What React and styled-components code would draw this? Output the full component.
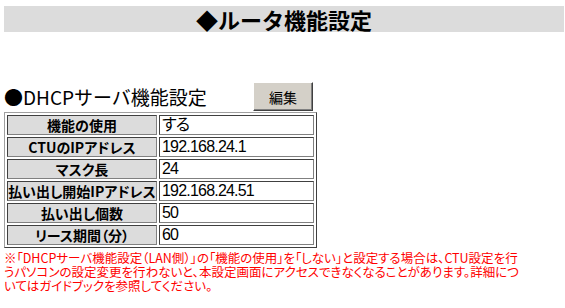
import React from 'react';
import styled, { createGlobalStyle } from 'styled-components';

const GlobalStyle = createGlobalStyle`
  html, body {
    margin: 0;
    padding: 0;
    background: #ffffff;
  }
  body {
    font-family: "Noto Sans CJK JP", "DejaVu Sans", sans-serif;
    color: #000000;
  }
`;

const Page = styled.div`
  padding: 6px 1px 0 4px;
  font-feature-settings: "palt";
`;

const TitleBar = styled.h1`
  margin: 0;
  height: 26px;
  background: #dcdcdc;
  display: flex;
  align-items: center;
  justify-content: center;
  font-size: 22px;
  font-weight: bold;
  line-height: 26px;
  font-feature-settings: normal;
`;

const SectionHead = styled.div`
  margin-top: 50px;
  width: 309px;
  height: 30px;
  display: flex;
  align-items: center;
  justify-content: space-between;
`;

const SectionTitle = styled.h2`
  margin: 0;
  font-size: 19px;
  font-weight: normal;
  line-height: 22px;
  font-feature-settings: normal;
`;

const EditButton = styled.button`
  width: 60px;
  height: 29px;
  margin-bottom: 1px;
  padding: 0;
  background: #d4d0c8;
  border: 1px solid;
  border-color: #ffffff #404040 #404040 #ffffff;
  box-shadow: inset -1px -1px 0 #808080;
  font-family: "Noto Sans CJK JP", sans-serif;
  font-size: 14px;
  color: #000000;
  cursor: pointer;
`;

const InfoTable = styled.table`
  border-collapse: separate;
  border-spacing: 2px;
  border: 1px solid;
  border-color: #a0a0a0 #404040 #404040 #a0a0a0;
  width: 313px;
`;

const LabelCell = styled.th`
  box-sizing: border-box;
  width: 150px;
  height: 20px;
  padding: 0;
  background: #dcdcdc;
  border: 1px solid;
  border-color: #404040 #808080 #808080 #404040;
  font-size: 14px;
  font-weight: bold;
  line-height: 18px;
  text-align: center;
  white-space: nowrap;
`;

const ValueCell = styled.td`
  box-sizing: border-box;
  height: 20px;
  padding: 0 0 0 2px;
  border: 1px solid;
  border-color: #404040 #808080 #808080 #404040;
  font-family: "Liberation Sans", "Noto Sans CJK JP", sans-serif;
  font-size: 16px;
  letter-spacing: -0.8px;
  line-height: 18px;
  white-space: nowrap;
`;

const Note = styled.p`
  margin: 3px 0 0;
  color: #ff0000;
  font-size: 12.5px;
  line-height: 14px;
  white-space: nowrap;
`;

const rows = [
  ['機能の使用', 'する'],
  ['CTUのIPアドレス', '192.168.24.1'],
  ['マスク長', '24'],
  ['払い出し開始IPアドレス', '192.168.24.51'],
  ['払い出し個数', '50'],
  ['リース期間（分）', '60'],
];

export default function App() {
  return (
    <Page>
      <GlobalStyle />
      <TitleBar>◆ルータ機能設定</TitleBar>
      <SectionHead>
        <SectionTitle>●DHCPサーバ機能設定</SectionTitle>
        <EditButton>編集</EditButton>
      </SectionHead>
      <InfoTable>
        <tbody>
          {rows.map(([label, value]) => (
            <tr key={label}>
              <LabelCell>{label}</LabelCell>
              <ValueCell>{value}</ValueCell>
            </tr>
          ))}
        </tbody>
      </InfoTable>
      <Note>
        ※「DHCPサーバ機能設定（LAN側）」の「機能の使用」を「しない」と設定する場合は、CTU設定を行
        <br />
        うパソコンの設定変更を行わないと、本設定画面にアクセスできなくなることがあります。詳細につ
        <br />
        いてはガイドブックを参照してください。
      </Note>
    </Page>
  );
}
